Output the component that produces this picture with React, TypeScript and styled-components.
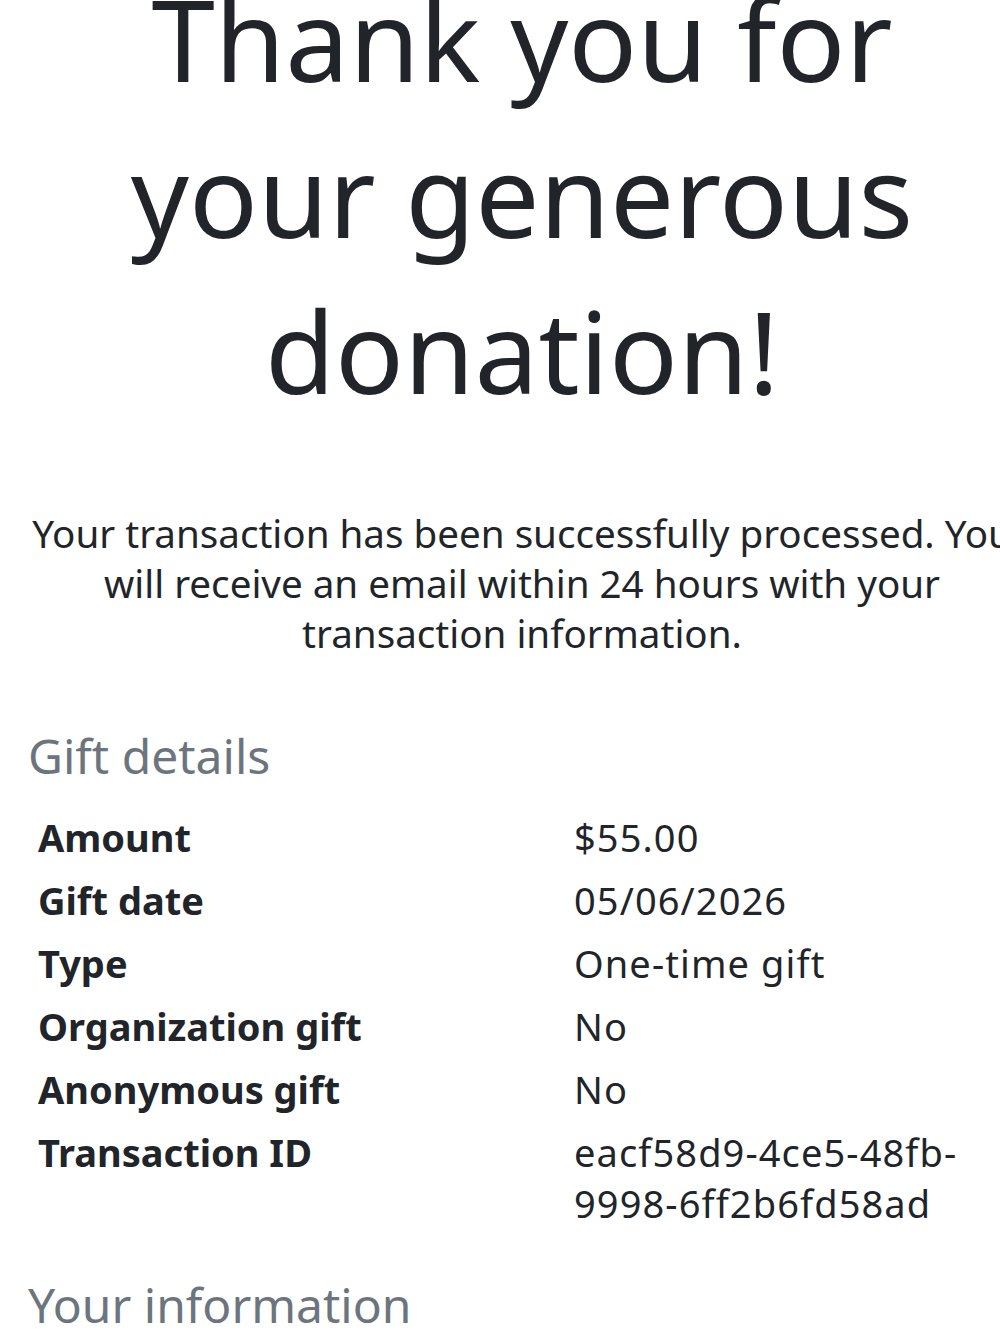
import React from "react";
import styled, { createGlobalStyle } from "styled-components";

const Global = createGlobalStyle`
  html, body {
    margin: 0;
    padding: 0;
    background: #ffffff;
    overflow-x: hidden;
  }
  body {
    font-family: "Noto Sans", "DejaVu Sans", sans-serif;
    color: #212529;
  }
`;

const Page = styled.main`
  box-sizing: border-box;
  width: 988px;
  margin: -40px 0 0 28px;
  padding: 0;
`;

const Title = styled.h1`
  margin: 0;
  font-size: 114px;
  line-height: 156px;
  font-weight: 400;
  text-align: center;
  color: #212529;
`;

const Lead = styled.p`
  margin: 80px 0 0;
  font-size: 38.6px;
  line-height: 50px;
  text-align: center;
  color: #212529;
`;

const SectionTitle = styled.h2<{ $gap: number }>`
  margin: ${(p) => p.$gap}px 0 0;
  font-size: 48px;
  line-height: 55px;
  font-weight: 400;
  color: #6c757d;
`;

const Details = styled.dl`
  margin: 29px 0 0;
  padding: 0 0 0 10px;
  display: grid;
  grid-template-columns: 536px 1fr;
  row-gap: 12px;
`;

const Label = styled.dt`
  margin: 0;
  font-size: 38px;
  line-height: 51px;
  font-weight: 700;
  color: #212529;
`;

const Value = styled.dd`
  margin: 0;
  font-size: 38px;
  line-height: 51px;
  font-weight: 400;
  letter-spacing: 1.1px;
  color: #212529;
  max-width: 410px;
  overflow-wrap: anywhere;
`;

const rows: [string, string][] = [
  ["Amount", "$55.00"],
  ["Gift date", "05/06/2026"],
  ["Type", "One-time gift"],
  ["Organization gift", "No"],
  ["Anonymous gift", "No"],
  ["Transaction ID", "eacf58d9-4ce5-48fb-9998-6ff2b6fd58ad"],
];

export default function App() {
  return (
    <>
      <Global />
      <Page>
        <Title>Thank you for your generous donation!</Title>
        <Lead>
          Your transaction has been successfully processed. You will receive an
          email within 24 hours with your transaction information.
        </Lead>
        <SectionTitle $gap={70}>Gift details</SectionTitle>
        <Details>
          {rows.map(([k, v]) => (
            <React.Fragment key={k}>
              <Label>{k}</Label>
              <Value>{v}</Value>
            </React.Fragment>
          ))}
        </Details>
        <SectionTitle $gap={48}>Your information</SectionTitle>
      </Page>
    </>
  );
}
